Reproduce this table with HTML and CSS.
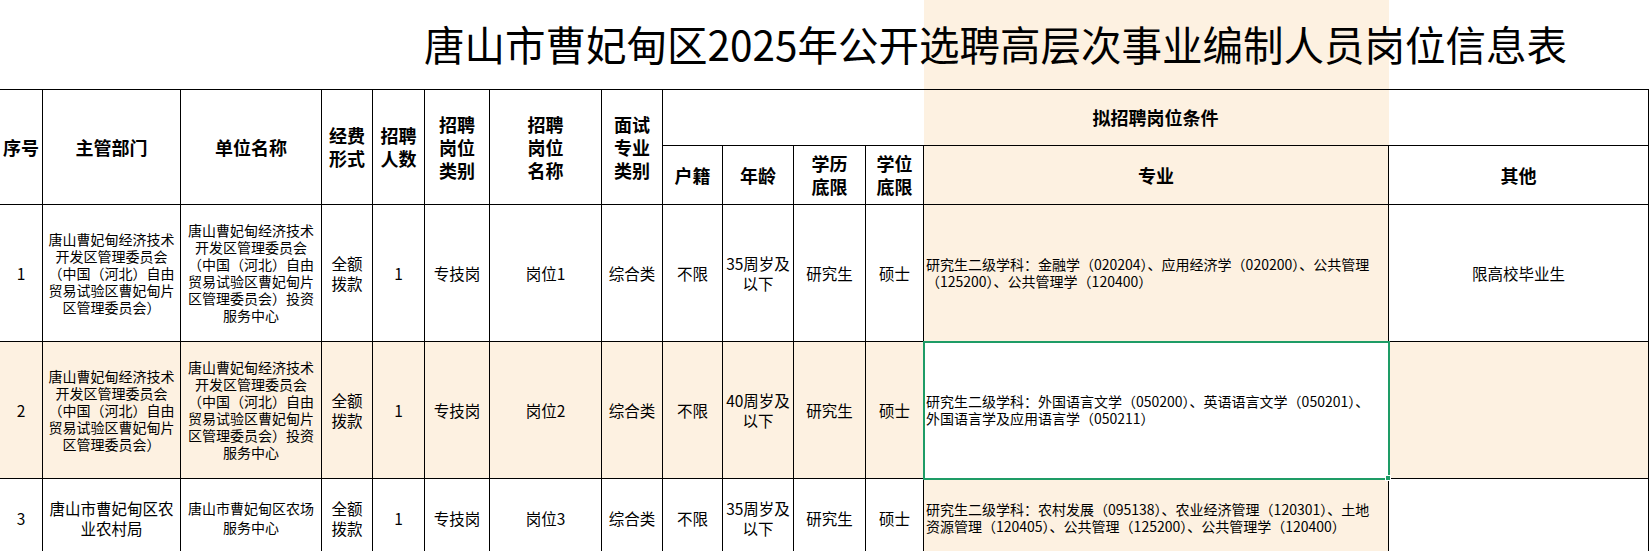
FILE: index.html
```html
<!DOCTYPE html>
<html lang="zh-CN">
<head>
<meta charset="utf-8">
<title>唐山市曹妃甸区2025年公开选聘高层次事业编制人员岗位信息表</title>
<link rel="stylesheet" href="styles.css">
</head>
<body>
<div class="title-bar"><h1 class="title">唐山市曹妃甸区2025年公开选聘高层次事业编制人员岗位信息表</h1></div>
<table class="sheet">
  <colgroup>
    <col class="c1"><col class="c2"><col class="c3"><col class="c4"><col class="c5"><col class="c6"><col class="c7">
    <col class="c8"><col class="c9"><col class="c10"><col class="c11"><col class="c12"><col class="c13"><col class="c14">
  </colgroup>
  <thead>
    <tr class="h1">
      <th rowspan="2" class="seq-h">序号</th>
      <th rowspan="2">主管部门</th>
      <th rowspan="2">单位名称</th>
      <th rowspan="2">经费<br>形式</th>
      <th rowspan="2">招聘<br>人数</th>
      <th rowspan="2">招聘<br>岗位<br>类别</th>
      <th rowspan="2">招聘<br>岗位<br>名称</th>
      <th rowspan="2">面试<br>专业<br>类别</th>
      <th colspan="6" class="cond">拟招聘岗位条件</th>
    </tr>
    <tr class="h2">
      <th>户籍</th>
      <th>年龄</th>
      <th>学历<br>底限</th>
      <th>学位<br>底限</th>
      <th class="tint">专业</th>
      <th>其他</th>
    </tr>
  </thead>
  <tbody>
    <tr class="r">
      <td>1</td>
      <td class="dept">唐山曹妃甸经济技术<br>开发区管理委员会<br>（中国（河北）自由<br>贸易试验区曹妃甸片<br>区管理委员会）</td>
      <td class="dept">唐山曹妃甸经济技术<br>开发区管理委员会<br>（中国（河北）自由<br>贸易试验区曹妃甸片<br>区管理委员会）投资<br>服务中心</td>
      <td>全额<br>拨款</td>
      <td>1</td>
      <td>专技岗</td>
      <td>岗位1</td>
      <td>综合类</td>
      <td>不限</td>
      <td>35周岁及<br>以下</td>
      <td>研究生</td>
      <td>硕士</td>
      <td class="major tint">研究生二级学科：金融学（020204）、应用经济学（020200）、公共管理<br>（125200）、公共管理学（120400）</td>
      <td>限高校毕业生</td>
    </tr>
    <tr class="r sel-row">
      <td>2</td>
      <td class="dept">唐山曹妃甸经济技术<br>开发区管理委员会<br>（中国（河北）自由<br>贸易试验区曹妃甸片<br>区管理委员会）</td>
      <td class="dept">唐山曹妃甸经济技术<br>开发区管理委员会<br>（中国（河北）自由<br>贸易试验区曹妃甸片<br>区管理委员会）投资<br>服务中心</td>
      <td>全额<br>拨款</td>
      <td>1</td>
      <td>专技岗</td>
      <td>岗位2</td>
      <td>综合类</td>
      <td>不限</td>
      <td>40周岁及<br>以下</td>
      <td>研究生</td>
      <td>硕士</td>
      <td class="major selected">研究生二级学科：外国语言文学（050200）、英语语言文学（050201）、<br>外国语言学及应用语言学（050211）</td>
      <td></td>
    </tr>
    <tr class="r3">
      <td>3</td>
      <td>唐山市曹妃甸区农<br>业农村局</td>
      <td class="unit3">唐山市曹妃甸区农场<br>服务中心</td>
      <td>全额<br>拨款</td>
      <td>1</td>
      <td>专技岗</td>
      <td>岗位3</td>
      <td>综合类</td>
      <td>不限</td>
      <td>35周岁及<br>以下</td>
      <td>研究生</td>
      <td>硕士</td>
      <td class="major tint">研究生二级学科：农村发展（095138）、农业经济管理（120301）、土地<br>资源管理（120405）、公共管理（125200）、公共管理学（120400）</td>
      <td></td>
    </tr>
  </tbody>
</table>
</body>
</html>
```
FILE: styles.css
```css
html, body {
  margin: 0;
  padding: 0;
  overflow: hidden;
  background: #ffffff;
}

body {
  font-family: "Noto Sans CJK SC", "Noto Sans", sans-serif;
  color: #000000;
}

.title-bar {
  height: 89px;
  box-sizing: border-box;
  display: flex;
  align-items: center;
  padding-left: 424px;
  background: linear-gradient(to right, transparent 924px, #fdf1e1 924px, #fdf1e1 1389px, transparent 1389px);
}

.title {
  margin: 0;
  font-size: 40.5px;
  font-weight: 400;
  line-height: 1;
  white-space: nowrap;
}

.sheet {
  border-collapse: separate;
  border-spacing: 0;
  table-layout: fixed;
  width: 1649px;
  border-top: 1px solid #000000;
}

.c1 { width: 43px; }
.c2 { width: 138px; }
.c3 { width: 141px; }
.c4 { width: 51px; }
.c5 { width: 52px; }
.c6 { width: 65px; }
.c7 { width: 112px; }
.c8 { width: 61px; }
.c9 { width: 60px; }
.c10 { width: 71px; }
.c11 { width: 72px; }
.c12 { width: 58px; }
.c13 { width: 465px; }
.c14 { width: 260px; }

.sheet th,
.sheet td {
  box-sizing: border-box;
  border-right: 1px solid #000000;
  border-bottom: 1px solid #000000;
  padding: 0 1px;
  text-align: center;
  vertical-align: middle;
  white-space: nowrap;
}

.sheet th {
  font-size: 18px;
  font-weight: 700;
  line-height: 23px;
}

.sheet td {
  font-size: 15.5px;
  font-weight: 400;
  line-height: 20px;
}

.h1 { height: 56px; }
.h2 { height: 59px; }
.r { height: 137px; }
.r3 { height: 78px; }

.seq-h {
  font-size: 16px;
}

.sheet th.cond {
  background: linear-gradient(to right, transparent 261px, #fdf1e1 261px, #fdf1e1 726px, transparent 726px);
}

.sheet .tint,
.sel-row td {
  background: #fdf1e1;
}

.sheet td.dept {
  font-size: 14px;
  line-height: 17px;
}

.sheet td.unit3 {
  font-size: 14px;
  line-height: 19px;
}

.sheet td.major {
  font-size: 14px;
  line-height: 17px;
  text-align: left;
  padding-left: 2px;
}

.sel-row td.selected {
  position: relative;
  background: #ffffff;
  outline: 2px solid #1e9c66;
  outline-offset: -1px;
}

.sel-row td.selected::after {
  content: "";
  position: absolute;
  right: -3px;
  bottom: -3px;
  width: 4px;
  height: 4px;
  background: #1e9c66;
  border: 1px solid #ffffff;
}
```
